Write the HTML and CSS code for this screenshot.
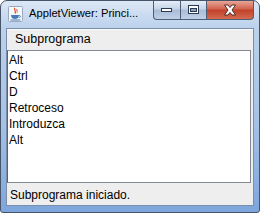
FILE: index.html
```html
<!DOCTYPE html>
<html lang="es">
<head>
    <meta charset="UTF-8">
    <title>AppletViewer</title>
    <link rel="stylesheet" href="styles.css">
</head>
<body>

<div class="window">
    <div class="titlebar">
        <svg class="appIcon" width="15" height="16" viewBox="0 0 15 16">
            <rect x="0.5" y="0.5" width="14" height="15" rx="1" fill="#f4f7fb" stroke="#9aa9bd"/>
            <path d="M7 2 C5 4 9 5 7 7.5" stroke="#e0532a" stroke-width="1.3" fill="none"/>
            <path d="M9 3 C8 4.5 10 5 9 6.5" stroke="#e0532a" stroke-width="1" fill="none"/>
            <path d="M3 9 H11 C11 12 9 13 7 13 C5 13 3 12 3 9 Z" fill="#4a79b8"/>
            <path d="M11 9.5 C13 9.5 13 11.5 11 11.5" stroke="#4a79b8" stroke-width="1" fill="none"/>
            <rect x="2.5" y="13.5" width="10" height="1" fill="#4a79b8"/>
        </svg>
        <span class="title">AppletViewer: Princi...</span>
        <div class="captionBtns">
            <span class="capBtn minBtn">
                <svg width="14" height="6" viewBox="0 0 14 6"><rect x="1.5" y="1.5" width="10" height="3" fill="#fff" stroke="#2a3a52"/></svg>
            </span>
            <span class="capBtn maxBtn">
                <svg width="12" height="10" viewBox="0 0 12 10"><rect x="0.5" y="0.5" width="10" height="8" fill="#fff" stroke="#2a3a52"/><rect x="2.5" y="3.5" width="6" height="3" fill="#8fa3bf" stroke="#2a3a52"/></svg>
            </span>
            <span class="capBtn closeBtn">
                <svg width="14" height="12" viewBox="0 0 14 12"><path d="M1.5 1 H5 L7 3.5 L9 1 H12.5 L9 6 L12.5 11 H9 L7 8.5 L5 11 H1.5 L5 6 Z" fill="#fff" stroke="#3b2020" stroke-width="0.9"/></svg>
            </span>
        </div>
    </div>

    <div class="client">
        <div class="menubar">
            <span class="menuItem">Subprograma</span>
        </div>
        <div class="textArea">
            <p>Alt</p>
            <p>Ctrl</p>
            <p>D</p>
            <p>Retroceso</p>
            <p>Introduzca</p>
            <p>Alt</p>
        </div>
        <div class="status">Subprograma iniciado.</div>
    </div>
</div>

</body>
</html>
```

FILE: styles.css
```css
* {
    padding: 0;
    margin: 0;
    box-sizing: border-box;
}
body {
    background: #ffffff;
    width: 261px;
    height: 215px;
    overflow: hidden;
}
.window {
    width: 260px;
    height: 213px;
    border: 1px solid #46546a;
    border-radius: 7px 7px 3px 3px;
    background: linear-gradient(#dce7f5, #bcd2ec 26px, #a3c0e6 60%, #7ea6dc);
    padding: 0 5px 6px 5px;
    display: flex;
    flex-direction: column;
}
.titlebar {
    height: 27px;
    display: flex;
    align-items: flex-start;
}
.appIcon {
    flex-shrink: 0;
    margin: 5px 0 0 2px;
}
.title {
    font-family: "Liberation Sans", Arial, sans-serif;
    font-size: 11.2px;
    color: #000;
    margin: 6px 0 0 6px;
    white-space: nowrap;
}
.captionBtns {
    margin-left: auto;
    display: flex;
    flex-shrink: 0;
    height: 19px;
}
.capBtn {
    flex-shrink: 0;
    display: flex;
    align-items: center;
    justify-content: center;
    height: 19px;
    border: 1px solid #4d5d75;
    border-top: none;
}
.minBtn {
    width: 27px;
    border-right: none;
    border-radius: 0 0 0 4px;
    background: linear-gradient(#e6edf7, #c5d4e8 45%, #a9bcd6 50%, #bfd0e6);
}
.maxBtn {
    width: 27px;
    background: linear-gradient(#e6edf7, #c5d4e8 45%, #a9bcd6 50%, #bfd0e6);
}
.closeBtn {
    width: 47px;
    border-left: none;
    border-radius: 0 0 4px 0;
    background: linear-gradient(#e8a597, #d1624c 45%, #c2402a 50%, #d56b4f);
}
.client {
    flex: 1;
    border: 1px solid #7b8ea9;
    background: #eeeeee;
    display: flex;
    flex-direction: column;
    font-family: "Liberation Sans", Arial, sans-serif;
    font-size: 12px;
    color: #000;
}
.menubar {
    height: 21px;
    border-top: 1px solid #fbfbfb;
    padding-left: 8px;
    line-height: 19px;
}
.menuItem {
    font-size: 12.5px;
}
.textArea {
    height: 133px;
    margin-right: 2px;
    background: #ffffff;
    border: 1px solid #838a93;
    border-left-color: #5a6270;
    padding: 1px 0 0 1px;
    line-height: 16px;
}
.status {
    flex: 1;
    padding: 5px 0 0 3px;
}
```
